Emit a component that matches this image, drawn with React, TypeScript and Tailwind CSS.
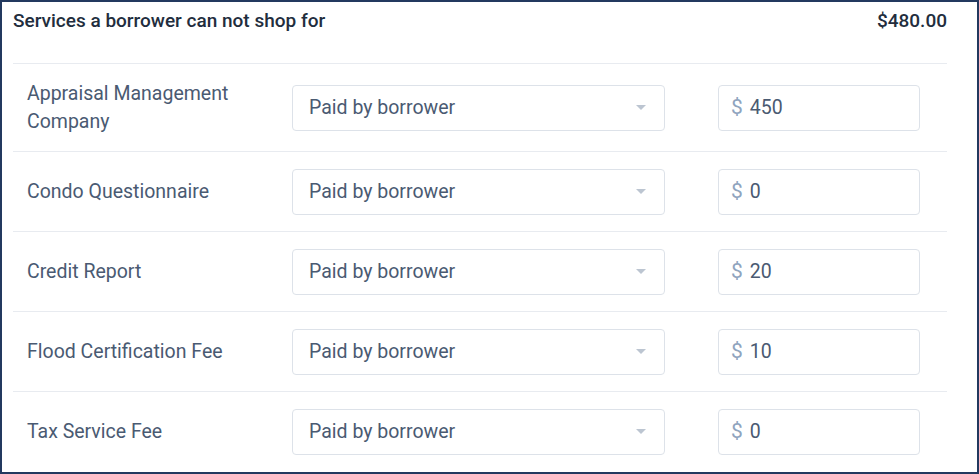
const FEES: { label: string; amount: string }[] = [
  { label: "Appraisal Management Company", amount: "450" },
  { label: "Condo Questionnaire", amount: "0" },
  { label: "Credit Report", amount: "20" },
  { label: "Flood Certification Fee", amount: "10" },
  { label: "Tax Service Fee", amount: "0" },
];

function Caret() {
  return (
    <svg width="10" height="5" viewBox="0 0 10 5" className="shrink-0">
      <path d="M0 0 L10 0 L5 5 Z" fill="#bcc5d1" />
    </svg>
  );
}

export default function App() {
  return (
    <div className="w-[979px] h-[474px] bg-white font-['Roboto',sans-serif]">
      <div className="h-full border-2 border-[#23395f] bg-white pl-[11px] pr-[30px]">
        <div className="flex justify-between items-start pt-[5px] h-[61px] text-[19px] font-medium text-[#222d3d]">
          <span>Services a borrower can not shop for</span>
          <span>$480.00</span>
        </div>
        {FEES.map((fee, i) => (
          <div
            key={fee.label}
            className={
              "flex items-center px-[14px] border-t border-[#e8ebf0] text-[19.5px] text-[#4a5a72]" +
              (i === 0 ? " h-[88px]" : " h-[80px]")
            }
          >
            <div className="w-[265px] pr-[30px] leading-[28px]">{fee.label}</div>
            <div className="flex items-center justify-between w-[373px] h-[46px] rounded-[4px] border border-[#dde2e9] pl-[16px] pr-[18px]">
              <span>Paid by borrower</span>
              <Caret />
            </div>
            <div className="flex items-center ml-[53px] w-[202px] h-[46px] rounded-[4px] border border-[#dde2e9] pl-[12px]">
              <span className="text-[21px] text-[#8fa4be] mr-[7px]">$</span>
              <span>{fee.amount}</span>
            </div>
          </div>
        ))}
      </div>
    </div>
  );
}
